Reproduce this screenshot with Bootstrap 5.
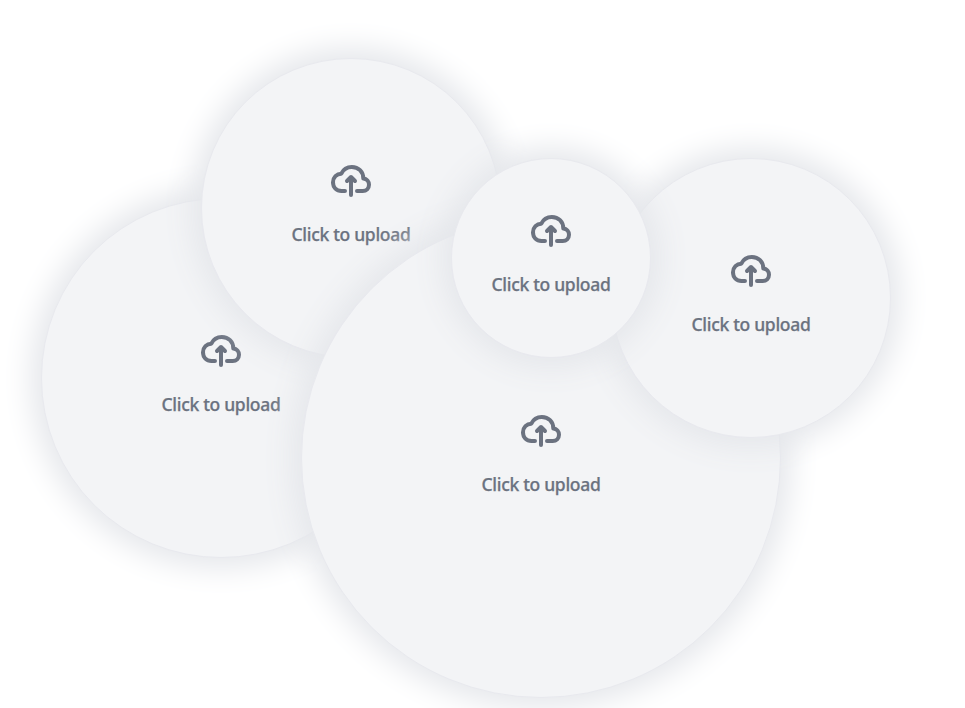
<!DOCTYPE html>
<html lang="en">
<head>
<meta charset="utf-8">
<meta name="viewport" content="width=device-width, initial-scale=1">
<title>Upload</title>
<link href="https://cdn.jsdelivr.net/npm/bootstrap@5.3.0/dist/css/bootstrap.min.css" rel="stylesheet">
<style>
body{background:#fff;font-family:"Open Sans","Noto Sans",sans-serif}
.canvas{width:965px;height:708px}
.bubble{width:var(--d);height:var(--d);left:var(--x);top:var(--y);background:#f3f4f6;border:1px solid #e8e9ee;box-shadow:0 0 30px 10px #e5e7eb;color:#6b7280;cursor:pointer}
.bubble svg{width:40px;height:40px}
.bubble span{font-family:"Noto Sans",sans-serif;font-size:17.5px;letter-spacing:-.3px;font-weight:500;-webkit-text-stroke:.25px currentColor;line-height:28px;margin-top:19px;margin-bottom:7px;white-space:nowrap}
.b1{--d:360px;--x:41px;--y:198px}
.b2{--d:300px;--x:201px;--y:58px}
.b3{--d:480px;--x:301px;--y:218px}
.b4{--d:280px;--x:611px;--y:158px}
.b5{--d:200px;--x:451px;--y:158px}
</style>
</head>
<body>
<svg class="d-none"><symbol id="cloud" viewBox="0 0 40 40"><g fill="none" stroke="currentColor" stroke-width="4" stroke-linecap="round" stroke-linejoin="round"><path d="M14 30H10.500C5.500 30 2 26.500 2 21.300C2 16.300 5.700 12.700 10.300 12.700C12.500 8 16.300 6 20.800 6C27.500 6 32.300 10.700 32.300 17.500C35.900 17.800 38 20.500 38 23.800C38 27.400 35.300 30 31.700 30H26"/><path d="M20 34V18M16 20L20 16L24 20"/></g></symbol></svg>
<main class="canvas position-relative overflow-hidden">
<div class="bubble b1 position-absolute rounded-circle d-flex flex-column align-items-center justify-content-center"><svg><use href="#cloud"/></svg><span>Click to upload</span></div>
<div class="bubble b2 position-absolute rounded-circle d-flex flex-column align-items-center justify-content-center"><svg><use href="#cloud"/></svg><span>Click to upload</span></div>
<div class="bubble b3 position-absolute rounded-circle d-flex flex-column align-items-center justify-content-center"><svg><use href="#cloud"/></svg><span>Click to upload</span></div>
<div class="bubble b4 position-absolute rounded-circle d-flex flex-column align-items-center justify-content-center"><svg><use href="#cloud"/></svg><span>Click to upload</span></div>
<div class="bubble b5 position-absolute rounded-circle d-flex flex-column align-items-center justify-content-center"><svg><use href="#cloud"/></svg><span>Click to upload</span></div>
</main>
<script src="https://cdn.jsdelivr.net/npm/bootstrap@5.3.0/dist/js/bootstrap.bundle.min.js"></script>
</body>
</html>
